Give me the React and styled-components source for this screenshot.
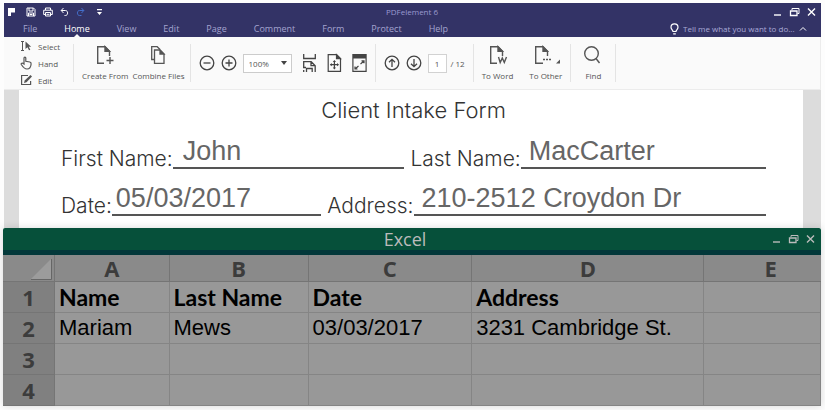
import { useState } from "react";
import styled, { createGlobalStyle } from "styled-components";

const menu = ["File", "Home", "View", "Edit", "Page", "Comment", "Form", "Protect", "Help"];

const columns = [
    { letter: "A", width: "14%" },
    { letter: "B", width: "17%" },
    { letter: "C", width: "20%" },
    { letter: "D", width: "28.4%" },
    { letter: "E", width: "auto" },
];

const rows = [
    ["Name", "Last Name", "Date", "Address", ""],
    ["Mariam", "Mews", "03/03/2017", "3231 Cambridge St.", ""],
    ["", "", "", "", ""],
    ["", "", "", "", ""],
];

const WindowControls = () => (
    <Controls>
        <IconButton aria-label="Minimize">
            <svg width="9" height="10" viewBox="0 0 9 10">
                <path d="M1 8h7" stroke="currentColor" strokeWidth="1.4" />
            </svg>
        </IconButton>
        <IconButton aria-label="Restore">
            <svg width="11" height="10" viewBox="0 0 11 10" fill="none" stroke="currentColor">
                <path d="M3 3V1.5h7v5H8.5" />
                <path d="M1.5 4h6.500v4.500H1.500z" strokeWidth="1.3" />
            </svg>
        </IconButton>
        <IconButton aria-label="Close">
            <svg width="9" height="10" viewBox="0 0 9 10">
                <path d="M1 1.500l7 7M8 1.500l-7 7" stroke="currentColor" strokeWidth="1.4" />
            </svg>
        </IconButton>
    </Controls>
);

const FileIcon = ({ children }) => (
    <svg width="20" height="20" viewBox="0 0 20 20" fill="none" stroke="currentColor" strokeWidth="1.4">
        <path d="M9 18.300H2.700V1.700h7.300l4.500 4.500V11" />
        <path d="M10 1.700v4.500h4.500z" fill="currentColor" />
        {children}
    </svg>
);

const App = () => {
    const [active, setActive] = useState("Home");
    const [form, setForm] = useState({
        first: "John",
        last: "MacCarter",
        date: "05/03/2017",
        address: "210-2512 Croydon Dr",
    });

    const handleChange = (e) => {
        setForm({ ...form, [e.target.name]: e.target.value });
    };

    return (
        <>
            <GlobalStyle />
            <Desktop>
                <PdfWindow>
                    <Header>
                        <TitleRow>
                            <QuickBar>
                                <svg width="8" height="10" viewBox="0 0 8 10" fill="#fff">
                                    <path d="M0 1h7v4.500H3V9H0z" />
                                </svg>
                                <QuickTools>
                                    <IconButton aria-label="Save">
                                        <svg width="10" height="10" viewBox="0 0 10 10" fill="none" stroke="currentColor">
                                            <path d="M1 1h6.500L9 2.500V9H1zM3 1v3h4V1M2.500 9V6h5v3M3.500 7.500h3" />
                                        </svg>
                                    </IconButton>
                                    <IconButton aria-label="Print">
                                        <svg width="10" height="10" viewBox="0 0 10 10" fill="none" stroke="currentColor">
                                            <path d="M2.500 3V1h5v2M2.500 7.500H.700V3.200h8.600v4.300H7.500M2.500 5.500h5V9h-5zM3.500 7.300h3" />
                                        </svg>
                                    </IconButton>
                                    <IconButton aria-label="Undo">
                                        <svg width="9" height="10" viewBox="0 0 9 10" fill="none" stroke="currentColor">
                                            <path d="M3.500 1L1.200 3.500 3.500 6M1.200 3.500h4.300C8.300 3.500 8.300 8.500 5.500 8.500H4.500" />
                                        </svg>
                                    </IconButton>
                                    <IconButton aria-label="Redo" $color="#4470cc">
                                        <svg width="9" height="10" viewBox="0 0 9 10" fill="none" stroke="currentColor">
                                            <path d="M5.500 1l2.300 2.500L5.500 6M7.800 3.500H3.500C.700 3.500.700 8.500 3.500 8.500H5.500" />
                                        </svg>
                                    </IconButton>
                                    <IconButton aria-label="Customize toolbar">
                                        <svg width="14" height="10" viewBox="0 0 14 10" fill="currentColor">
                                            <path d="M5 2h5v1.200H5zM5 5h5L7.500 8z" />
                                        </svg>
                                    </IconButton>
                                </QuickTools>
                            </QuickBar>
                            <AppName>PDFelement 6</AppName>
                            <WindowControls />
                        </TitleRow>
                        <MenuRow>
                            <Menu>
                                {menu.map((x) => (
                                    <MenuItem key={x} $active={x === active} onClick={() => setActive(x)}>
                                        {x}
                                    </MenuItem>
                                ))}
                            </Menu>
                            <Hint>
                                <svg width="9" height="12" viewBox="0 0 9 12" fill="none" stroke="#fff" strokeWidth="1.200">
                                    <path d="M3 8.500C3 7 1 6.500 1 4.200a3.500 3.300 0 017 0C8 6.500 6 7 6 8.500zM3.200 10.800h2.600" />
                                </svg>
                                <HintInput aria-label="Search commands" placeholder="Tell me what you want to do..." />
                                <IconButton aria-label="Collapse ribbon">
                                    <svg width="8" height="6" viewBox="0 0 8 6" fill="none" stroke="currentColor">
                                        <path d="M1 4.500l3-3 3 3" />
                                    </svg>
                                </IconButton>
                            </Hint>
                        </MenuRow>
                    </Header>

                    <Ribbon>
                        <ModeList>
                            <ModeButton>
                                <svg width="13" height="12" viewBox="0 0 13 12" fill="none" stroke="currentColor">
                                    <path d="M1 1.500h3M1 10.500h3M2.500 1.500v9" />
                                    <path d="M5.500 1.500v7.500l2-1.700 1.500 3 1.300-.600-1.500-3h2.400z" fill="currentColor" stroke="none" />
                                </svg>
                                Select
                            </ModeButton>
                            <ModeButton>
                                <svg width="13" height="14" viewBox="0 0 13 14" fill="none" stroke="currentColor" strokeWidth="1.200">
                                    <path d="M4 8V2c0-1.300 1.800-1.300 1.800 0v3.300l4 .700c1.200.200 1.400 1 1.300 2-.200 3-1.200 5-4.100 5-2.800 0-3.800-1.500-5.700-4.500C.700 7.300 2.200 6.500 4 8z" />
                                </svg>
                                Hand
                            </ModeButton>
                            <ModeButton>
                                <svg width="13" height="12" viewBox="0 0 13 12" fill="none" stroke="currentColor" strokeWidth="1.200">
                                    <path d="M8 1.500H1.600v9h9V7" />
                                    <path d="M4 9l.700-2.500L10.500 1 12 2.500 6.500 8.200z" fill="currentColor" stroke="none" />
                                </svg>
                                Edit
                            </ModeButton>
                        </ModeList>
                        <Group $gap={4}>
                            <ToolButton>
                                <FileIcon>
                                    <path d="M15 12v7M11.500 15.500h7" />
                                </FileIcon>
                                Create From
                            </ToolButton>
                            <ToolButton>
                                <svg width="20" height="20" viewBox="0 0 20 20" fill="none" stroke="currentColor" strokeWidth="1.300">
                                    <path d="M6 14.500H3.700V1.700h5.500L12 4.500" />
                                    <path d="M6.500 5h5.500l4 4v9.300H6.500z" />
                                    <path d="M12 5v4h4z" fill="currentColor" />
                                </svg>
                                Combine Files
                            </ToolButton>
                        </Group>
                        <Group $gap={10}>
                            <Cluster>
                                <IconButton aria-label="Zoom out" $color="#444">
                                    <svg width="16" height="16" viewBox="0 0 16 16" fill="none" stroke="currentColor" strokeWidth="1.300">
                                        <circle cx="8" cy="8" r="6.800" />
                                        <path d="M4.500 8h7" />
                                    </svg>
                                </IconButton>
                                <IconButton aria-label="Zoom in" $color="#444">
                                    <svg width="16" height="16" viewBox="0 0 16 16" fill="none" stroke="currentColor" strokeWidth="1.300">
                                        <circle cx="8" cy="8" r="6.800" />
                                        <path d="M4.500 8h7M8 4.500v7" />
                                    </svg>
                                </IconButton>
                                <SelectWrap>
                                    <ZoomSelect aria-label="Zoom level" defaultValue="100%">
                                        <option>50%</option>
                                        <option>100%</option>
                                        <option>200%</option>
                                    </ZoomSelect>
                                    <svg width="6" height="4" viewBox="0 0 6 4">
                                        <path d="M0 0h6L3 4z" fill="#444" />
                                    </svg>
                                </SelectWrap>
                            </Cluster>
                            <IconButton aria-label="Fit width" $color="#444">
                                <svg width="15" height="20" viewBox="0 0 15 20" fill="none" stroke="currentColor" strokeWidth="1.300">
                                    <path d="M1.700 1v4.500h11.600V1M1.700 14V8.700h7.500l4 4V19M9 8.700v4h4M1 14.500h3M4.500 19v-3.500h5.700V19M1.700 19v-2" />
                                </svg>
                            </IconButton>
                            <IconButton aria-label="Fit page" $color="#444">
                                <svg width="15" height="20" viewBox="0 0 15 20" fill="none" stroke="currentColor" strokeWidth="1.200">
                                    <path d="M1.200 1.700h8.300l4 4v12.600H1.200z" />
                                    <path d="M9.500 1.700v4h4z" fill="currentColor" />
                                    <path d="M7.400 8v7.500M3.600 11.700h7.600" />
                                    <path d="M7.400 7l1.600 2H5.800zM7.400 16.400l1.600-2H5.800zM2.800 11.700l2-1.600v3.200zM12 11.700l-2-1.600v3.200z" fill="currentColor" stroke="none" />
                                </svg>
                            </IconButton>
                            <IconButton aria-label="Full screen" $color="#444">
                                <svg width="15" height="20" viewBox="0 0 15 20" fill="none" stroke="currentColor" strokeWidth="1.200">
                                    <path d="M.900 1.700h13.200v16.600H.900z" />
                                    <path d="M1 1.500h13v4H1z" fill="currentColor" stroke="none" />
                                    <path d="M8.500 11l3.500-3M9.500 7.800H12V10.300M6.500 13L3 16M3 13.500V16H5.500" />
                                </svg>
                            </IconButton>
                        </Group>
                        <Group $gap={4}>
                            <Cluster>
                                <IconButton aria-label="Previous page" $color="#444">
                                    <svg width="16" height="16" viewBox="0 0 16 16" fill="none" stroke="currentColor" strokeWidth="1.300">
                                        <circle cx="8" cy="8" r="6.800" />
                                        <path d="M8 12V4.500M5 7.300l3-3 3 3" />
                                    </svg>
                                </IconButton>
                                <IconButton aria-label="Next page" $color="#444">
                                    <svg width="16" height="16" viewBox="0 0 16 16" fill="none" stroke="currentColor" strokeWidth="1.300">
                                        <circle cx="8" cy="8" r="6.800" />
                                        <path d="M8 4v7.500M5 8.700l3 3 3-3" />
                                    </svg>
                                </IconButton>
                                <PageInput aria-label="Page number" defaultValue="1" />
                            </Cluster>
                            <PageCount>/ 12</PageCount>
                        </Group>
                        <Group $gap={16}>
                            <ToolButton>
                                <FileIcon>
                                    <path d="M10.500 12l1.700 5.500L14.300 13l2 4.500L18.500 12" />
                                </FileIcon>
                                To Word
                            </ToolButton>
                            <ToolButton>
                                <svg width="32" height="20" viewBox="-4 0 32 20" fill="none" stroke="currentColor" strokeWidth="1.400">
                                    <path d="M9 18.300H1.700V1.700H9l4.500 4.500V11" />
                                    <path d="M9 1.700v4.500h4.500z" fill="currentColor" />
                                    <path d="M9 14.500h9" strokeDasharray="2 1" />
                                    <path d="M26 14.500V18.500h-4z" fill="currentColor" stroke="none" />
                                </svg>
                                To Other
                            </ToolButton>
                        </Group>
                        <Group $gap={0}>
                            <ToolButton>
                                <svg width="20" height="20" viewBox="0 0 20 20" fill="none" stroke="currentColor" strokeWidth="1.400">
                                    <circle cx="8.500" cy="8.500" r="6.800" />
                                    <path d="M13 13.500l3.500 4.500" />
                                </svg>
                                Find
                            </ToolButton>
                        </Group>
                    </Ribbon>

                    <Viewer>
                        <Page>
                            <FormTitle>Client Intake Form</FormTitle>
                            <FormRow>
                                <Field $grow={342}>
                                    First Name:
                                    <FieldInput name="first" value={form.first} onChange={handleChange} $indent={10} />
                                </Field>
                                <Field $grow={354}>
                                    Last Name:
                                    <FieldInput name="last" value={form.last} onChange={handleChange} $indent={8} />
                                </Field>
                            </FormRow>
                            <FormRow>
                                <Field $grow={261}>
                                    Date:
                                    <FieldInput name="date" value={form.date} onChange={handleChange} $indent={4} />
                                </Field>
                                <Field $grow={440}>
                                    Address:
                                    <FieldInput name="address" value={form.address} onChange={handleChange} $indent={8} />
                                </Field>
                            </FormRow>
                        </Page>
                    </Viewer>
                </PdfWindow>

                <ExcelWindow>
                    <ExcelBar>
                        <ExcelName>Excel</ExcelName>
                        <WindowControls />
                    </ExcelBar>
                    <Sheet>
                        <colgroup>
                            <Col $width="52px" />
                            {columns.map((x) => (
                                <Col key={x.letter} $width={x.width} />
                            ))}
                        </colgroup>
                        <thead>
                            <tr>
                                <Corner aria-label="Select all">
                                    <svg width="22" height="22" viewBox="0 0 22 22">
                                        <path d="M20 1v20H0z" fill="#9c9c9c" />
                                        <path d="M20.500 1v20.500H0" fill="none" stroke="#666" />
                                    </svg>
                                </Corner>
                                {columns.map((x) => (
                                    <ColHead key={x.letter}>{x.letter}</ColHead>
                                ))}
                            </tr>
                        </thead>
                        <tbody>
                            {rows.map((row, i) => (
                                <tr key={i}>
                                    <RowHead>{i + 1}</RowHead>
                                    {row.map((x, j) => (
                                        <Cell key={j} $bold={i === 0}>{x}</Cell>
                                    ))}
                                </tr>
                            ))}
                        </tbody>
                    </Sheet>
                </ExcelWindow>
            </Desktop>
        </>
    );
};

const GlobalStyle = createGlobalStyle`
    * {
        box-sizing: border-box;
    }
    body {
        margin: 0;
        background: #fdfdfd;
        font-family: "Open Sans", "Noto Sans", sans-serif;
    }
    button, input, select {
        font: inherit;
        color: inherit;
        margin: 0;
        padding: 0;
        border: 0;
        background: none;
    }
    button {
        cursor: pointer;
    }
    svg {
        display: block;
        flex: none;
    }
`;

const Desktop = styled.main`
    padding: 3px 4px 4px 3px;
`;

const PdfWindow = styled.section`
    margin-left: 1px;
`;

const Header = styled.header`
    background: #333366;
    color: #fff;
`;

const TitleRow = styled.div`
    display: grid;
    grid-template-columns: 1fr auto 1fr;
    align-items: center;
    height: 17px;
    padding: 0 5px 0 4px;
`;

const QuickBar = styled.div`
    display: flex;
    align-items: center;
    gap: 10px;
`;

const QuickTools = styled.div`
    display: flex;
    align-items: center;
    gap: 7px;
`;

const IconButton = styled.button`
    display: flex;
    align-items: center;
    color: ${(props) => props.$color || "inherit"};
`;

const AppName = styled.div`
    font-size: 8px;
    line-height: 12px;
    color: #9a9ad0;
`;

const Controls = styled.div`
    display: flex;
    justify-content: flex-end;
    gap: 7px;
`;

const MenuRow = styled.div`
    display: flex;
    justify-content: space-between;
    align-items: center;
    height: 17px;
    padding: 0 14px 0 19px;
`;

const Menu = styled.nav`
    display: flex;
    gap: 27px;
    height: 100%;
`;

const MenuItem = styled.button`
    position: relative;
    font-size: 9px;
    line-height: 15px;
    color: ${(props) => (props.$active ? "#fff" : "#a3a3cf")};

    &::after {
        content: "";
        display: ${(props) => (props.$active ? "block" : "none")};
        position: absolute;
        bottom: 0;
        left: 50%;
        margin-left: -3px;
        border: 3px solid transparent;
        border-top: 0;
        border-bottom-color: #fafafa;
    }
`;

const Hint = styled.div`
    display: flex;
    align-items: center;
    gap: 4px;
`;

const HintInput = styled.input`
    width: 112px;
    font-size: 8px;
    line-height: 12px;

    &::placeholder {
        color: #a9a9d6;
        opacity: 1;
    }
`;

const Ribbon = styled.div`
    display: flex;
    align-items: center;
    height: 53px;
    padding-left: 16px;
    background: #fafafa;
    border: 1px solid #ececec;
    border-width: 0 1px 1px 0;
    color: #555;
    font-size: 8px;
`;

const ModeList = styled.div`
    display: flex;
    flex-direction: column;
    justify-content: center;
    gap: 3px;
    height: 49px;
    padding-right: 13px;
`;

const ModeButton = styled.button`
    display: flex;
    align-items: center;
    gap: 5px;
    height: 14px;
`;

const Group = styled.div`
    display: flex;
    align-items: center;
    gap: ${(props) => props.$gap}px;
    height: 38px;
    padding: 0 8px;
    border-left: 1px solid #e4e4e4;

    &:nth-child(2) {
        padding-right: 5px;
    }

    &:last-child {
        padding: 0 12px;
        border-right: 1px solid #e4e4e4;
    }
`;

const Cluster = styled.div`
    display: flex;
    align-items: center;
    gap: 6px;
`;

const ToolButton = styled.button`
    display: flex;
    flex-direction: column;
    align-items: center;
    gap: 5px;
    line-height: 12px;
    white-space: nowrap;
`;

const SelectWrap = styled.div`
    display: flex;
    align-items: center;
    width: 49px;
    height: 19px;
    padding-right: 4px;
    border: 1px solid #ccc;
    background: #fff;
`;

const ZoomSelect = styled.select`
    appearance: none;
    flex: 1;
    min-width: 0;
    padding-left: 5px;
    outline: none;
`;

const PageInput = styled.input`
    width: 19px;
    height: 19px;
    border: 1px solid #d2d2d2;
    background: #fff;
    text-align: center;
`;

const PageCount = styled.span`
    font-size: 8px;
`;

const Viewer = styled.div`
    padding: 0 18px 0 15px;
    background: #dcdcdc;
`;

const Page = styled.form`
    padding: 8px 37px 12px 42px;
    background: #fff;
    color: #333;
    font-family: Inter, "Liberation Sans", sans-serif;
    font-weight: 300;
`;

const FormTitle = styled.h1`
    margin: 0;
    font-size: 22px;
    font-weight: 300;
    line-height: 24px;
    text-align: center;
`;

const FormRow = styled.div`
    display: flex;
    gap: 6px;
    padding-top: 11px;
`;

const Field = styled.label`
    display: flex;
    align-items: flex-end;
    flex: ${(props) => props.$grow} 1 0;
    min-width: 0;
    font-size: 21px;
    line-height: 20px;
    white-space: nowrap;
`;

const FieldInput = styled.input`
    flex: 1;
    min-width: 0;
    height: 36px;
    padding: 3px 0 0 ${(props) => props.$indent}px;
    border-bottom: 2px solid #555;
    color: #666;
    font-family: "Liberation Sans", Arial, sans-serif;
    font-size: 27px;
    font-weight: 400;
    outline: none;
`;

const ExcelWindow = styled.section`
    position: relative;
    box-shadow: 0 0 8px rgba(0, 0, 0, 0.15);
`;

const ExcelBar = styled.header`
    display: grid;
    grid-template-columns: 1fr auto 1fr;
    align-items: center;
    height: 27px;
    padding: 0 6px;
    background: #06503a;
    border-bottom: 5px solid #03383a;
    border-radius: 2px 2px 0 0;
    color: #bbb;
`;

const ExcelName = styled.h2`
    grid-column: 2;
    margin: 0;
    padding-right: 14px;
    font-size: 18px;
    font-weight: 400;
    line-height: 22px;
`;

const Sheet = styled.table`
    width: 100%;
    table-layout: fixed;
    border-collapse: separate;
    border-spacing: 0;
    background: #989898;
`;

const Col = styled.col`
    width: ${(props) => props.$width};
`;

const HeadCell = styled.th`
    padding: 0;
    border-right: 1px solid #757575;
    border-bottom: 1px solid #757575;
    color: #3c3c3c;
    font-size: 22px;
    font-weight: 700;
`;

const ColHead = styled(HeadCell)`
    height: 27px;
    background: #8a8a8a;
    line-height: 26px;

    &:last-child {
        padding-left: 16px;
        border-right: 0;
    }
`;

const Corner = styled(ColHead)`
    svg {
        margin: 1px 1px 0 auto;
    }
`;

const RowHead = styled(HeadCell)`
    height: 31px;
    background: #808080;
    line-height: 28px;
`;

const Cell = styled.td`
    padding: 0 0 0 4px;
    border-right: 1px solid #858585;
    border-bottom: 1px solid #858585;
    color: #000;
    font-family: ${(props) => (props.$bold ? "Lato, Carlito" : '"Liberation Sans", Arial')}, sans-serif;
    font-size: ${(props) => (props.$bold ? 23 : 22)}px;
    font-weight: ${(props) => (props.$bold ? 700 : 400)};
    line-height: 28px;
    white-space: nowrap;
`;

export default App;
